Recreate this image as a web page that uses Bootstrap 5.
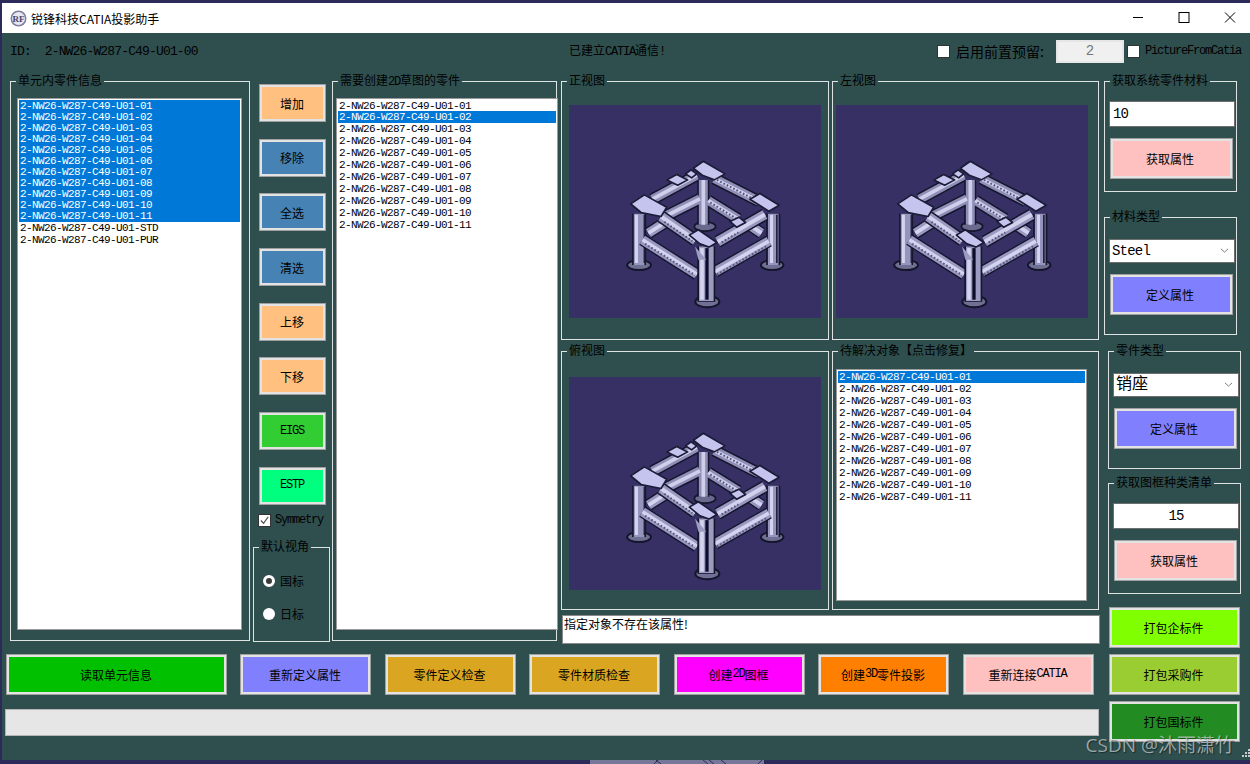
<!DOCTYPE html>
<html lang="zh-CN">
<head>
  <meta charset="UTF-8">
  <meta name="viewport" content="width=device-width, initial-scale=1">
  <title>锐锋科技CATIA投影助手</title>
  <link href="https://cdn.jsdelivr.net/npm/bootstrap@5.3.2/dist/css/bootstrap.min.css" rel="stylesheet">
  <style>
    body { background: #2c2a58; height: 764px; overflow: hidden; color: #000; font: 12px/15px "Noto Sans CJK SC", sans-serif; }
    .app-window { margin: 3px 0 0 2px; height: 757px; overflow: hidden; }
    .win-title { height: 30px; background: #fff; }
    .win-title-text { margin-left: 4px; }
    .win-logo { margin-left: 8px; }
    .win-ctrl { width: 46px; height: 30px; }
    .win-ctrls { margin-right: -3px; }
    .win-client { height: 727px; background: #2f4f4f; position: relative; }

    .latin { font-family: "Liberation Mono", monospace; font-size: 12px; letter-spacing: -1.2px; }
    .top-row { height: 48px; padding: 0 9px 12px 8px; }
    .id-text { width: 559px; font: 13px/15px "Liberation Mono", monospace; letter-spacing: -.85px; white-space: pre; }
    .preset-label { font-size: 14px; margin: 0 9px 0 6px; width: 91px; white-space: nowrap; }
    .preset-input.form-control { width: 68px; height: 23px; padding: 0; border-radius: 0; border: 2px solid #e6e6e6; background: #f0f0f0; color: #777; text-align: center; font: 14px "Liberation Mono", monospace; margin-right: 3px; }
    .pic-label { margin-left: 5px; width: 96px; }

    .win-check.form-check-input { width: 13px; height: 13px; margin: 0; border-radius: 0; border: 1px solid #333; background-color: #fff; flex: none; }
    .win-check.form-check-input:checked { background-color: #fff; background-size: 11px; background-position: center; background-image: url("data:image/svg+xml,%3csvg xmlns='http://www.w3.org/2000/svg' viewBox='0 0 12 12'%3e%3cpath fill='none' stroke='%23555' stroke-width='1.3' d='M2 6l3 3 5-7'/%3e%3c/svg%3e"); }
    .win-radio.form-check-input { width: 12px; height: 12px; margin: 0 5px 0 0; border-radius: 50%; border: 0; background-color: #fff; flex: none; }
    .win-radio.form-check-input:checked { background-color: #3c3c3c; border: 3px solid #fff; background-image: none; }

    .grp { border: 1px solid #dfe3e3; }
    .grp-title { width: fit-content; height: 17px; margin: -10px 0 0 5px; padding: 0 2px; background: #2f4f4f; white-space: nowrap; }

    .win-btn.btn { display: flex; align-items: center; justify-content: center; padding: 0 1px 0 0; border-radius: 0; border: 1px solid #a0a0a0; box-shadow: inset 0 0 0 2px #e3e3e3; color: #000; font-size: 12px; line-height: 15px; }
    .c-orange { background: #ffc080; }
    .c-steel { background: #4682b4; }
    .c-lime { background: #32cd32; }
    .c-spring { background: #00ff7f; }
    .c-green { background: #00c000; }
    .c-violet { background: #8080ff; }
    .c-gold { background: #daa520; }
    .c-magenta { background: #f0f; }
    .c-amber { background: #ff8000; }
    .c-pink { background: #ffc0c0; }
    .c-chart { background: #80ff00; }
    .c-yellow { background: #9acd32; }
    .c-forest { background: #228b22; }

    .parts-list.list-group { display: block; margin-top: 9px; height: 532px; border: 1px solid #9a9a9a; padding: 1px; background: #fff; border-radius: 0; }
    .parts-list .list-group-item { padding: 0 0 0 1px; height: 12px; border: 0; border-radius: 0; font: 11px/12px "Liberation Mono", monospace; letter-spacing: -.6px; color: #000; background: transparent; white-space: nowrap; }
    .parts-list .list-group-item.active { background: #0078d7; color: #fff; }

    .col-a { width: 240px; height: 560px; margin-left: 8px; }
    .col-a .parts-list { margin-left: 6px; width: 225px; }
    .col-b { width: 77px; margin-left: 3px; }
    .tool-stack { margin: 3px 0 0 6px; gap: 16.7px; }
    .tool-stack .win-btn { width: 67px; height: 38px; }
    .sym-row { margin: 9px 0 0 5px; height: 13px; }
    .sym-row .latin { margin-left: 4px; }
    .view-grp { height: 95px; margin-top: 20px; }
    .radio-row { margin: 20px 0 0 9px; height: 12px; }
    .radio-row + .radio-row { margin-top: 21px; }
    .col-c { width: 225px; height: 560px; margin-left: 2px; }
    .col-c .parts-list { margin-left: 3px; width: 222px; }
    .col-d { width: 539px; margin-left: 4px; }
    .view-grid { display: grid; grid-template-columns: 268px 267px; grid-template-rows: 259px 259px; gap: 11px 3px; }
    .view-pic { display: block; width: 252px; height: 213px; background: #363064; margin: 16px 0 0 7px; }
    .view-right .view-pic { margin-left: 3px; }
    .view-low .view-pic { margin-top: 18px; }
    .solve-list.parts-list.list-group { margin: 10px 0 0 3px; width: 251px; height: 232px; }
    .msg-box { margin: 5px 0 0 1px; width: 538px; height: 29px; background: #fff; border: 1px solid #8a8a8a; padding: 0 1px; }

    .left-area { width: 1098px; }
    .side-col { width: 150px; }
    .side-grp { width: 133px; margin-left: 4px; }
    .side-shift { margin-left: 8px; }
    .h-short { height: 111px; }
    .h-tall { height: 118px; }
    .gap-25 { margin-top: 25px; }
    .gap-16 { margin-top: 16px; }
    .gap-14 { margin-top: 14px; }
    .side-input.form-control, .side-select.form-select { border-radius: 0; border: 1px solid #6e6e6e; color: #000; width: 126px; margin-left: 4px; }
    .side-input.form-control { height: 26px; margin-top: 12px; padding: 0 3px; font: 14px/24px "Liberation Mono", monospace; letter-spacing: -.9px; }
    .side-select.form-select { height: 24px; margin-top: 14px; padding: 0 2px; background-image: url("data:image/svg+xml,%3csvg xmlns='http://www.w3.org/2000/svg' viewBox='0 0 10 6'%3e%3cpath fill='none' stroke='%23666' d='M1 1l4 4 4-4'/%3e%3c/svg%3e"); background-position: right 5px center; background-size: 9px; font: 14px/22px "Liberation Mono", "Noto Sans CJK SC", monospace; letter-spacing: -.8px; }
    .side-select.cjk-sel { font-size: 16px; letter-spacing: 0; }
    .side-grp .win-btn { width: 123px; height: 41px; margin: 11px 0 0 5px; padding-right: 3px; }
    .pack-btn.win-btn { width: 131px; height: 41px; margin: 6px 0 0 9px; padding-right: 2px; }
    .pack-first.win-btn { margin-top: 13px; }

    .bottom-row { margin: 10px 0 0 4px; gap: 13.5px; }
    .bottom-row .win-btn { width: 131px; height: 41px; }
    .bottom-row .wide-btn { width: 221px; margin-right: -.5px; }
    .win-progress.progress { margin: 14px 0 0 3px; width: 1094px; height: 27px; border-radius: 0; background: #e6e6e6; border: 1px solid #b4b4b4; }

    .wm-text { position: absolute; right: 16px; bottom: 3px; font: 19px/24px "Open Sans", "Noto Sans CJK SC", sans-serif; color: rgba(214, 222, 222, .66); text-shadow: 1px 1px 1px rgba(0, 0, 0, .45); white-space: nowrap; }
    .grip { position: absolute; right: 0; bottom: 3px; }
    .desk-strip { display: block; height: 4px; margin-left: 590px; width: 174px; background: #77779a; }
  </style>
</head>
<body>

  <svg width="0" height="0" class="d-block">
    <defs>
      <path id="beamsBack" d="M415 240V375M305 347L405 297M430 302L520 358M262 298L395 226M448 236L582 304"/>
      <path id="hatchBack" d="M436 308L514 356M456 240L574 302"/>
      <path id="beamsLower" d="M232 420L396 524M450 516L612 424M250 400L300 368M590 400L548 372"/>
      <path id="hatchLower" d="M240 432L390 526M456 524L606 438"/>
      <path id="legsSide" d="M222 342V496M625 342V496"/>
      <path id="beamsFront" d="M288 350L392 422M600 344L458 426"/>
      <path id="hatchFront" d="M298 366L382 424M470 428L520 398"/>
      <filter id="softEdge" x="-5%" y="-5%" width="110%" height="110%"><feGaussianBlur stdDeviation="2.2"/></filter>
      <symbol id="frame3d" viewBox="12 15 756 640">
        <g fill="none" filter="url(#softEdge)">
          <ellipse cx="420" cy="380" rx="32" ry="14" fill="#6a6a8e" stroke="#14142c" stroke-width="5"/>
          <use href="#beamsBack" stroke="#14142c" stroke-width="36"/>
          <use href="#beamsBack" stroke="#8e8eb6" stroke-width="27"/>
          <use href="#beamsBack" stroke="#cfcfec" stroke-width="11"/>
          <use href="#hatchBack" stroke="#53537a" stroke-width="6" stroke-dasharray="5 6"/>
          <ellipse cx="222" cy="496" rx="36" ry="15" fill="#6f6f94" stroke="#14142c" stroke-width="6"/>
          <ellipse cx="622" cy="496" rx="34" ry="15" fill="#6f6f94" stroke="#14142c" stroke-width="6"/>
          <use href="#legsSide" stroke="#14142c" stroke-width="42"/>
          <use href="#legsSide" stroke="#9494bc" stroke-width="32"/>
          <path d="M214 345V490M620 345V490" stroke="#d4d4f0" stroke-width="9"/>
          <path d="M238 345V490M636 345V490" stroke="#20203c" stroke-width="5"/>
          <use href="#beamsLower" stroke="#14142c" stroke-width="36"/>
          <use href="#beamsLower" stroke="#9898c0" stroke-width="28"/>
          <use href="#beamsLower" stroke="#d4d4f0" stroke-width="11"/>
          <use href="#hatchLower" stroke="#5a5a80" stroke-width="6" stroke-dasharray="5 6"/>
          <use href="#beamsFront" stroke="#14142c" stroke-width="38"/>
          <use href="#beamsFront" stroke="#9898c0" stroke-width="29"/>
          <use href="#beamsFront" stroke="#d2d2ee" stroke-width="12"/>
          <use href="#hatchFront" stroke="#53537a" stroke-width="6" stroke-dasharray="5 6"/>
          <ellipse cx="427" cy="606" rx="36" ry="17" fill="#6f6f94" stroke="#14142c" stroke-width="6"/>
          <path d="M424 440V606" stroke="#14142c" stroke-width="54"/>
          <path d="M424 440V604" stroke="#9c9cc2" stroke-width="44"/>
          <path d="M411 445V600" stroke="#d4d4f0" stroke-width="11"/>
          <path d="M426 445V600" stroke="#10102a" stroke-width="10"/>
          <path d="M390 440L424 480L400 480Z" fill="#9c9cc2"/>
          <g fill="#c4c4ee" stroke="#1a1a36" stroke-width="5" stroke-linejoin="round">
            <path d="M385 205L415 184L480 222L448 240L412 226Z"/>
            <path d="M197 312L238 285L305 322L288 350L228 338Z"/>
            <path d="M555 298L585 281L643 316L612 334Z"/>
            <path d="M373 406L400 390L456 428L432 442L405 432Z"/>
            <path d="M306 240L335 224L368 240L338 256Z"/>
            <path d="M495 365L522 352L542 368L515 382Z"/>
            <path d="M362 222L378 210L395 222L380 234Z"/>
          </g>
        </g>
      </symbol>
    </defs>
  </svg>

  <div class="app-window">
    <div class="win-title d-flex align-items-center">
      <svg class="win-logo" width="17" height="17" viewBox="0 0 17 17">
        <circle cx="8.5" cy="8.5" r="8" fill="#7f7f9f"/>
        <circle cx="8.5" cy="8.5" r="6.5" fill="#e8e8f2"/>
        <text x="8.5" y="11.5" text-anchor="middle" font-family="Liberation Serif" font-size="9" font-weight="700" fill="#45456e">RF</text>
      </svg>
      <span class="win-title-text">锐锋科技CATIA投影助手</span>
      <div class="d-flex ms-auto win-ctrls">
        <svg class="win-ctrl" viewBox="0 0 46 30"><path d="M18 14.5H28" stroke="#000"/></svg>
        <svg class="win-ctrl" viewBox="0 0 46 30"><rect x="18" y="9.5" width="10" height="10" fill="none" stroke="#000"/></svg>
        <svg class="win-ctrl" viewBox="0 0 46 30"><path d="M18 9.5L28 19.5M28 9.5L18 19.5" stroke="#000"/></svg>
      </div>
    </div>

    <div class="win-client">
      <div class="top-row d-flex align-items-center">
        <span class="id-text">ID:  2-NW26-W287-C49-U01-00</span>
        <span>已建立<span class="latin">CATIA</span>通信<span class="latin">!</span></span>
        <div class="d-flex align-items-center ms-auto">
          <input class="form-check-input win-check" type="checkbox">
          <span class="preset-label">启用前置预留:</span>
          <input class="form-control preset-input" type="text" value="2" disabled>
          <input class="form-check-input win-check" type="checkbox">
          <span class="latin pic-label">PictureFromCatia</span>
        </div>
      </div>

      <div class="d-flex">
        <div class="left-area">
          <div class="d-flex">
            <div class="grp col-a">
              <div class="grp-title">单元内零件信息</div>
              <div class="list-group parts-list" id="listUnit"></div>
            </div>

            <div class="col-b d-flex flex-column">
              <div class="tool-stack d-flex flex-column">
                <button class="btn win-btn c-orange">增加</button>
                <button class="btn win-btn c-steel">移除</button>
                <button class="btn win-btn c-steel">全选</button>
                <button class="btn win-btn c-steel">清选</button>
                <button class="btn win-btn c-orange">上移</button>
                <button class="btn win-btn c-orange">下移</button>
                <button class="btn win-btn c-lime latin">EIGS</button>
                <button class="btn win-btn c-spring latin">ESTP</button>
              </div>
              <div class="sym-row d-flex align-items-center">
                <input class="form-check-input win-check" type="checkbox" checked>
                <span class="latin">Symmetry</span>
              </div>
              <div class="grp view-grp">
                <div class="grp-title">默认视角</div>
                <div class="radio-row d-flex align-items-center">
                  <input class="form-check-input win-radio" type="radio" name="viewStd" checked><span>国标</span>
                </div>
                <div class="radio-row d-flex align-items-center">
                  <input class="form-check-input win-radio" type="radio" name="viewStd"><span>日标</span>
                </div>
              </div>
            </div>

            <div class="grp col-c">
              <div class="grp-title">需要创建<span class="latin">2D</span>草图的零件</div>
              <div class="list-group parts-list" id="listDraft"></div>
            </div>

            <div class="col-d">
              <div class="view-grid">
                <div class="grp">
                  <div class="grp-title">正视图</div>
                  <svg class="view-pic"><use href="#frame3d"/></svg>
                </div>
                <div class="grp view-right">
                  <div class="grp-title">左视图</div>
                  <svg class="view-pic"><use href="#frame3d"/></svg>
                </div>
                <div class="grp view-low">
                  <div class="grp-title">俯视图</div>
                  <svg class="view-pic"><use href="#frame3d"/></svg>
                </div>
                <div class="grp">
                  <div class="grp-title">待解决对象【点击修复】</div>
                  <div class="list-group parts-list solve-list" id="listSolve"></div>
                </div>
              </div>
              <div class="msg-box">指定对象不存在该属性!</div>
            </div>
          </div>

          <div class="bottom-row d-flex">
            <button class="btn win-btn wide-btn c-green">读取单元信息</button>
            <button class="btn win-btn c-violet">重新定义属性</button>
            <button class="btn win-btn c-gold">零件定义检查</button>
            <button class="btn win-btn c-gold">零件材质检查</button>
            <button class="btn win-btn c-magenta">创建<span class="latin">2D</span>图框</button>
            <button class="btn win-btn c-amber">创建<span class="latin">3D</span>零件投影</button>
            <button class="btn win-btn c-pink">重新连接<span class="latin">CATIA</span></button>
          </div>
          <div class="progress win-progress"></div>
        </div>

        <div class="side-col">
          <div class="grp side-grp h-short">
            <div class="grp-title">获取系统零件材料</div>
            <input class="form-control side-input" type="text" value="10">
            <button class="btn win-btn c-pink">获取属性</button>
          </div>
          <div class="grp side-grp h-tall gap-25">
            <div class="grp-title">材料类型</div>
            <select class="form-select side-select"><option>Steel</option></select>
            <button class="btn win-btn c-violet">定义属性</button>
          </div>
          <div class="grp side-grp side-shift h-tall gap-16">
            <div class="grp-title">零件类型</div>
            <select class="form-select side-select cjk-sel"><option>销座</option></select>
            <button class="btn win-btn c-violet">定义属性</button>
          </div>
          <div class="grp side-grp side-shift h-short gap-14">
            <div class="grp-title">获取图框种类清单</div>
            <input class="form-control side-input text-center" type="text" value="15">
            <button class="btn win-btn c-pink">获取属性</button>
          </div>
          <button class="btn win-btn pack-btn pack-first c-chart">打包企标件</button>
          <button class="btn win-btn pack-btn c-yellow">打包采购件</button>
          <button class="btn win-btn pack-btn c-forest">打包国标件</button>
        </div>
      </div>

      <div class="wm-text">CSDN @沐雨潇竹</div>
      <svg class="grip" width="8" height="8" viewBox="0 0 8 8" fill="#c4cccc">
        <rect x="6" y="0" width="2" height="2"/><rect x="3" y="3" width="2" height="2"/><rect x="6" y="3" width="2" height="2"/>
        <rect x="0" y="6" width="2" height="2"/><rect x="3" y="6" width="2" height="2"/><rect x="6" y="6" width="2" height="2"/>
      </svg>
    </div>
  </div>
  <svg class="desk-strip" viewBox="0 0 174 4"><path d="M68 0L64 4M71 4L66 0M113 0L118 4M119 0L124 4M131 0L136 4M172 0L168 4" stroke="#2c2a58"/></svg>

  <script>
    const partNames = [];
    for (let i = 1; i <= 11; i++) {
      partNames.push('2-NW26-W287-C49-U01-' + String(i).padStart(2, '0'));
    }

    function fillList(id, names, selected) {
      const box = document.getElementById(id);
      names.forEach((name, index) => {
        const row = document.createElement('div');
        row.className = 'list-group-item' + (selected.includes(index) ? ' active' : '');
        row.textContent = name;
        box.appendChild(row);
      });
    }

    fillList('listUnit', [...partNames, '2-NW26-W287-C49-U01-STD', '2-NW26-W287-C49-U01-PUR'], [0, 1, 2, 3, 4, 5, 6, 7, 8, 9, 10]);
    fillList('listDraft', partNames, [1]);
    fillList('listSolve', partNames, [0]);
  </script>

</body>
</html>
